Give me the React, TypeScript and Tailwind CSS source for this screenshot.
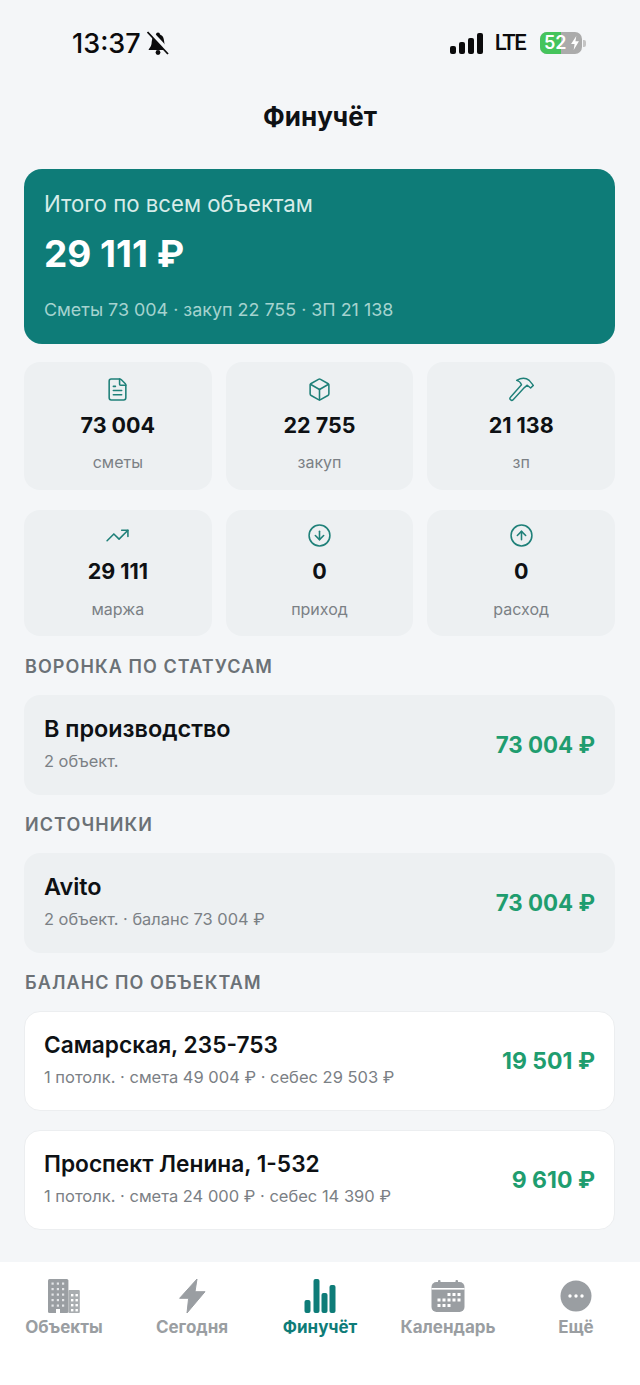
import { FileText, Box, TrendingUp, CircleArrowDown, CircleArrowUp } from 'lucide-react';

function HammerIcon({ size, strokeWidth, className }: { size: number; strokeWidth: number; className: string }) {
  return (
    <svg width={size} height={size} viewBox="0 0 26 25" fill="none" stroke="currentColor" strokeWidth={strokeWidth} strokeLinejoin="round" className={className}>
      <path d="M13 7.5 L1.5 20.5 a1.9 1.9 0 0 0 2.8 2.6 L16 10.5 L19 8 L22.5 11 L25.3 8.2 L21 3 C18 0.5 13 0 8 3 C10 3.5 12 5 13 7.5 Z" />
    </svg>
  );
}

const stats = [
  [
    { icon: FileText, value: '73 004', label: 'сметы' },
    { icon: Box, value: '22 755', label: 'закуп' },
    { icon: HammerIcon, value: '21 138', label: 'зп' },
  ],
  [
    { icon: TrendingUp, value: '29 111', label: 'маржа' },
    { icon: CircleArrowDown, value: '0', label: 'приход' },
    { icon: CircleArrowUp, value: '0', label: 'расход' },
  ],
];

function SectionTitle({ children, className }: { children: string; className: string }) {
  return (
    <h2 className={`pl-[1px] text-[18px] leading-[20px] font-semibold tracking-[0.06em] text-[#6b7176] ${className}`}>{children}</h2>
  );
}

function GrayRow({ title, sub, amount }: { title: string; sub: string; amount: string }) {
  return (
    <div className="h-[100px] rounded-[16px] bg-[#edf0f2] pl-[20px] pr-[20px] flex items-center justify-between">
      <div className="pb-[4px]">
        <div className="text-[23.4px] leading-[28px] font-semibold text-[#0e1114]">{title}</div>
        <div className="mt-[8px] text-[16.4px] leading-[20px] text-[#7b8085]">{sub}</div>
      </div>
      <div className="text-[22.3px] font-bold text-[#1f9d6f]">{amount}</div>
    </div>
  );
}

function WhiteRow({ title, sub, amount }: { title: string; sub: string; amount: string }) {
  return (
    <div className="h-[100px] rounded-[16px] bg-white border border-[#eceef0] pl-[19px] pr-[19px] flex items-center justify-between">
      <div className="pb-[4px]">
        <div className="text-[22.7px] leading-[28px] font-semibold text-[#0e1114]">{title}</div>
        <div className="mt-[8px] text-[16.5px] leading-[20px] text-[#7b8085]">{sub}</div>
      </div>
      <div className="text-[23px] font-bold text-[#1f9d6f]">{amount}</div>
    </div>
  );
}

function TabIcon({ name }: { name: string }) {
  if (name === 'Объекты') {
    return (
      <svg width="36" height="34" viewBox="0 0 36 34">
        <rect x="2" y="0" width="20.4" height="34" rx="1.5" fill="#9a9ea2" />
        <rect x="22.4" y="11" width="11.4" height="23" rx="1" fill="#a9adb0" />
        {[3.5, 9, 14.5, 20, 25.5].map((y) =>
          [5.5, 10.8, 16].map((x) => <rect key={`${x}-${y}`} x={x} y={y} width="2.2" height="2.2" fill="#e4e6e8" />),
        )}
        <rect x="10" y="30" width="4" height="4" fill="#fff" />
        {[15, 20, 25, 30].map((y) =>
          [25, 29.5].map((x) => <rect key={`${x}-${y}`} x={x} y={y} width="2.4" height="2.4" fill="#fff" />),
        )}
      </svg>
    );
  }
  if (name === 'Сегодня') {
    return (
      <svg width="36" height="34" viewBox="0 0 36 34">
        <path d="M23 0 L5.6 19.3 L14.6 19.3 L13 34 L31 12.7 L21 12.7 Z" fill="#9a9ea2" stroke="#9a9ea2" strokeLinejoin="round" />
      </svg>
    );
  }
  if (name === 'Финучёт') {
    return (
      <svg width="36" height="34" viewBox="0 0 36 34" fill="#0e7c78">
        <rect x="2.5" y="21" width="6" height="13" rx="2" />
        <rect x="11.5" y="0" width="6" height="34" rx="2" />
        <rect x="19.5" y="14" width="6" height="20" rx="2" />
        <rect x="27.5" y="6" width="6" height="28" rx="2" />
      </svg>
    );
  }
  if (name === 'Календарь') {
    return (
      <svg width="36" height="34" viewBox="0 0 36 34">
        <rect x="1.5" y="3" width="33" height="30" rx="5" fill="#9a9ea2" />
        <rect x="1.5" y="9" width="33" height="1.6" fill="#fff" />
        <rect x="8" y="1" width="2.5" height="4" rx="1" fill="#9a9ea2" />
        <rect x="25.5" y="1" width="2.5" height="4" rx="1" fill="#9a9ea2" />
        {[
          [17.5, 14], [22.5, 14], [27.5, 14],
          [7.5, 19.5], [12.5, 19.5], [17.5, 19.5], [22.5, 19.5], [27.5, 19.5],
          [7.5, 25], [12.5, 25], [17.5, 25],
        ].map(([x, y]) => (
          <rect key={`${x}-${y}`} x={x} y={y} width="3" height="3" fill="#fff" />
        ))}
      </svg>
    );
  }
  return (
    <svg width="36" height="34" viewBox="0 0 36 34">
      <circle cx="18" cy="17" r="15.5" fill="#9a9ea2" />
      <circle cx="12" cy="17" r="1.7" fill="#fff" />
      <circle cx="18" cy="17" r="1.7" fill="#fff" />
      <circle cx="24" cy="17" r="1.7" fill="#fff" />
    </svg>
  );
}

const tabs = ['Объекты', 'Сегодня', 'Финучёт', 'Календарь', 'Ещё'];

export default function App() {
  return (
    <div className="w-[640px] h-[1385px] overflow-hidden bg-[#f4f6f8] flex flex-col font-['Inter','Noto_Sans',sans-serif]">
      {/* Status bar */}
      <div className="h-[86px] shrink-0 pt-[24px] pl-[72px] pr-[54px] flex items-start justify-between">
        <div className="flex items-center h-[38px]">
          <span className="text-[27px] font-medium leading-none text-[#0b0b0c]">13:37</span>
          <svg width="22" height="24" viewBox="0 0 22 24" className="ml-[6px]">
            <path d="M11 1.5a2 2 0 0 0-2 2C5 5 5 9 4.5 13 4 16 2 17 1.5 19h19c-.5-2-2.5-3-3-6C17 9 17 5 13 3.5a2 2 0 0 0-2-2Z" fill="#0b0b0c" />
            <circle cx="11" cy="21.5" r="2.4" fill="#0b0b0c" />
            <path d="M1.5 -1 L22 21" stroke="#f4f6f8" strokeWidth="4.5" />
            <path d="M0.5 1 L21 23" stroke="#0b0b0c" strokeWidth="1.8" />
          </svg>
        </div>
        <div className="flex items-center h-[38px]">
          <div className="flex items-end gap-[3px] h-[21px]">
            <span className="w-[6px] h-[8px] rounded-[2px] bg-[#0b0b0c]" />
            <span className="w-[6px] h-[12px] rounded-[2px] bg-[#0b0b0c]" />
            <span className="w-[6px] h-[16px] rounded-[2px] bg-[#0b0b0c]" />
            <span className="w-[6px] h-[21px] rounded-[2px] bg-[#0b0b0c]" />
          </div>
          <span className="ml-[12px] text-[22px] font-medium tracking-[-1.6px] leading-none text-[#0b0b0c] font-['Roboto',sans-serif]">LTE</span>
          <div className="ml-[15px] relative w-[42px] h-[22px] rounded-[7px] bg-[#ababab]">
            <div className="absolute inset-y-0 left-0 w-[21px] rounded-l-[7px] bg-[#45c45c]" />
            <span className="absolute left-[4px] top-0 text-[18px] leading-[22px] font-semibold text-white">52</span>
            <svg className="absolute right-[2px] top-[4px]" width="10" height="14" viewBox="0 0 11 16">
              <path d="M7 0 L1 9 H5 L4 16 L10 6 H6 Z" fill="#fff" />
            </svg>
          </div>
          <span className="ml-[1px] w-[3px] h-[7px] rounded-r-[2px] bg-[#c4c4c4]" />
        </div>
      </div>

      {/* Title */}
      <h1 className="h-[83px] shrink-0 pt-[16px] text-center text-[26px] leading-[30px] font-bold text-[#0e1114]">Финучёт</h1>

      <div className="pl-[24px] pr-[25px] flex-1">
        {/* Hero */}
        <div className="h-[175px] rounded-[18px] bg-[#0e7c78] pl-[20px] pt-[22px] text-white">
          <div className="text-[22.2px] leading-[26px] text-[#d7ece9]">Итого по всем объектам</div>
          <div className="mt-[15px] text-[37px] leading-[44px] font-bold">29 111 ₽</div>
          <div className="mt-[23px] text-[17.9px] leading-[22px] text-[#a5d3cf]">Сметы 73 004 · закуп 22 755 · ЗП 21 138</div>
        </div>

        {/* Stats */}
        {stats.map((row, i) => (
          <div key={i} className={`grid grid-cols-3 gap-x-[14px] ${i === 0 ? 'mt-[18px]' : 'mt-[20px]'}`}>
            {row.map((s) => (
              <div key={s.label} className={`rounded-[16px] bg-[#edf0f2] flex flex-col items-center ${i === 0 ? 'h-[128px] pt-[15px]' : 'h-[126px] pt-[13px]'}`}>
                <s.icon size={25} strokeWidth={1.5} className="text-[#1f8079]" />
                <div className="mt-[9px] text-[21.5px] leading-[28px] font-bold text-[#0e1114]">{s.value}</div>
                <div className={`text-[16px] leading-[20px] text-[#7b8085] ${i === 0 ? 'mt-[13px]' : 'mt-[14px]'}`}>{s.label}</div>
              </div>
            ))}
          </div>
        ))}

        <SectionTitle className="mt-[21px] mb-[18px]">ВОРОНКА ПО СТАТУСАМ</SectionTitle>
        <GrayRow title="В производство" sub="2 объект." amount="73 004 ₽" />

        <SectionTitle className="mt-[20px] mb-[18px]">ИСТОЧНИКИ</SectionTitle>
        <GrayRow title="Avito" sub="2 объект. · баланс 73 004 ₽" amount="73 004 ₽" />

        <SectionTitle className="mt-[20px] mb-[18px]">БАЛАНС ПО ОБЪЕКТАМ</SectionTitle>
        <div className="flex flex-col gap-[19px]">
          <WhiteRow title="Самарская, 235-753" sub="1 потолк. · смета 49 004 ₽ · себес 29 503 ₽" amount="19 501 ₽" />
          <WhiteRow title="Проспект Ленина, 1-532" sub="1 потолк. · смета 24 000 ₽ · себес 14 390 ₽" amount="9 610 ₽" />
        </div>
      </div>

      {/* Tab bar */}
      <div className="h-[123px] shrink-0 bg-white grid grid-cols-5 pt-[17px]">
        {tabs.map((t) => (
          <div key={t} className="flex flex-col items-center">
            <TabIcon name={t} />
            <span className={`mt-[4px] text-[17px] leading-[20px] font-bold ${t === 'Финучёт' ? 'text-[#0e7c78]' : 'text-[#9a9ea2]'}`}>{t}</span>
          </div>
        ))}
      </div>
    </div>
  );
}
